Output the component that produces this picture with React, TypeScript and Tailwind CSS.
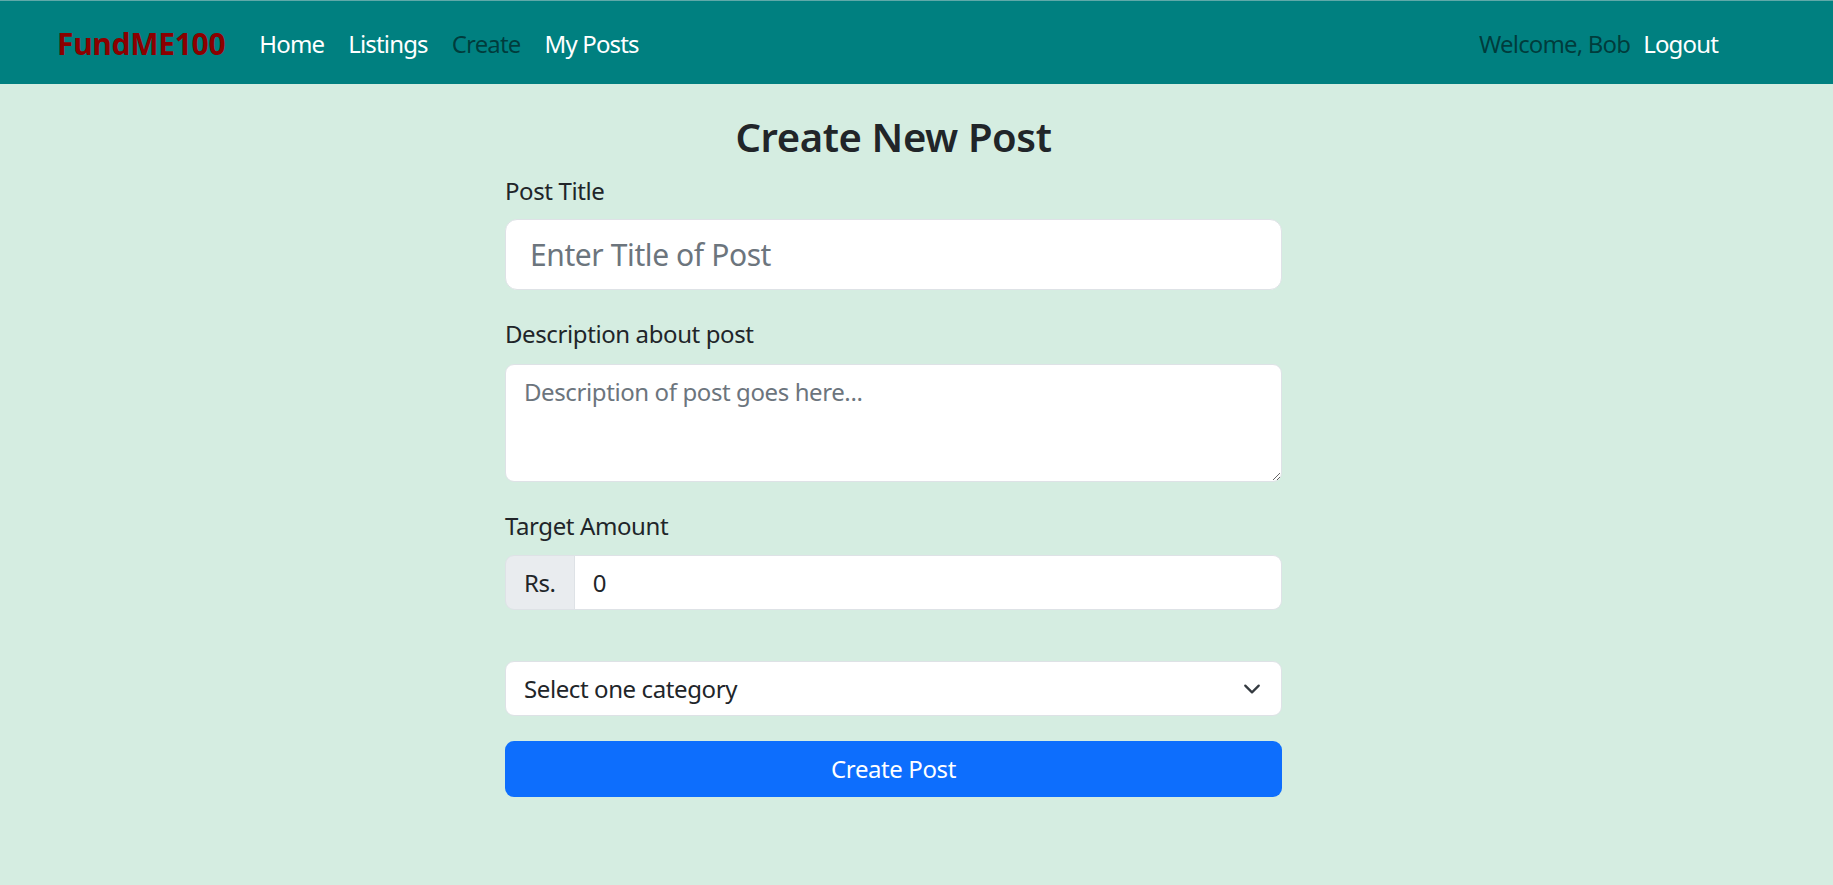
import React from 'react';

export default function App() {
  return (
    <div className="min-h-screen bg-[#d5ede1] font-['Noto_Sans',sans-serif] tracking-[-0.025em] text-[#212529]">
      {/* navbar */}
      <nav className="h-[84px] bg-[#008080] border-t border-[#5fa9a9] flex items-center pt-[2px] pl-[57px] pr-[115px]">
        <a href="#" className="text-[30px] font-bold tracking-[-0.01em] text-[#8b0000] mr-[22px] leading-none">
          FundME100
        </a>
        <ul className="flex text-[24px] leading-[36px] tracking-[-0.035em]">
          <li className="px-[12px] text-white">Home</li>
          <li className="px-[12px] text-white">Listings</li>
          <li className="px-[12px] text-black/55">Create</li>
          <li className="px-[12px] text-white">My Posts</li>
        </ul>
        <div className="ml-auto flex items-center gap-[13px] text-[24px] leading-[36px] tracking-[-0.035em]">
          <span className="text-black/55">Welcome, Bob</span>
          <a href="#" className="text-white">Logout</a>
        </div>
      </nav>

      <main className="flex justify-center pr-[46px]">
        <form className="w-[777px] pt-[28px]" onSubmit={(e) => e.preventDefault()}>
          <h3 className="text-center text-[40px] font-semibold tracking-[-0.01em] leading-[50px] mb-[11px]">
            Create New Post
          </h3>

          <label className="block text-[24px] leading-[36px] mb-[10px]">Post Title</label>
          <input
            type="text"
            placeholder="Enter Title of Post"
            className="block w-full h-[71px] bg-white border border-[#dee2e6] rounded-[12px] px-[24px] text-[30px] placeholder:text-[#6c757d] outline-none mb-[26px]"
          />

          <label className="block text-[24px] leading-[36px] mb-[12px]">Description about post</label>
          <textarea
            placeholder="Description of post goes here..."
            className="block w-full h-[118px] bg-white border border-[#dee2e6] rounded-[9px] px-[18px] py-[9px] text-[24px] leading-[36px] placeholder:text-[#6c757d] outline-none mb-[26px]"
          />

          <label className="block text-[24px] leading-[36px] mb-[11px]">Target Amount</label>
          <div className="flex h-[55px] mb-[51px]">
            <span className="flex items-center px-[18px] bg-[#e9ecef] border border-[#dee2e6] rounded-l-[9px] text-[24px]">
              Rs.
            </span>
            <input
              type="text"
              defaultValue="0"
              className="flex-1 min-w-0 bg-white border border-l-0 border-[#dee2e6] rounded-r-[9px] px-[18px] text-[24px] outline-none"
            />
          </div>

          <div className="relative mb-[25px]">
            <select className="block w-full h-[55px] appearance-none bg-white border border-[#dee2e6] rounded-[9px] pl-[18px] pr-[54px] text-[24px] outline-none">
              <option>Select one category</option>
              <option>Education</option>
              <option>Medical</option>
              <option>Disaster Relief</option>
            </select>
            <svg
              className="absolute right-[18px] top-1/2 -translate-y-1/2 pointer-events-none"
              width="24"
              height="18"
              viewBox="0 0 16 16"
              fill="none"
              stroke="#343a40"
              strokeWidth="2"
              strokeLinecap="round"
              strokeLinejoin="round"
            >
              <path d="m2 5 6 6 6-6" />
            </svg>
          </div>

          <button
            type="submit"
            className="block w-full h-[56px] bg-[#0d6efd] text-white text-[24px] rounded-[9px]"
          >
            Create Post
          </button>
        </form>
      </main>
    </div>
  );
}
